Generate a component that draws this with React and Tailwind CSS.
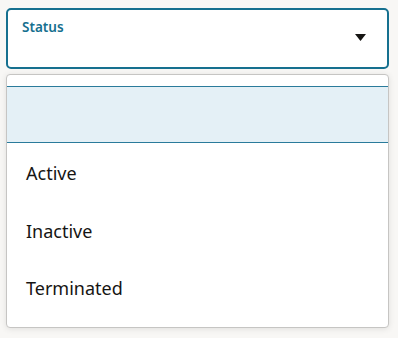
function StatusSelect() {
  const options = ["Active", "Inactive", "Terminated"];

  return (
    <div className="min-h-[338px] bg-[#f8f7f5] pl-[6px] pr-[9px] pt-[8px] font-['Noto_Sans',sans-serif]">
      <div className="flex h-[61px] items-start justify-between rounded-[5px] border-2 border-[#16708f] bg-white pl-[14px] pr-[21px] pt-[9px]">
        <span className="text-[13.5px] font-semibold leading-[16px] text-[#16708f]">Status</span>
        <svg className="mt-[15px]" width="11" height="7" viewBox="0 0 11 7">
          <path d="M0 0h11L5.5 7z" fill="#161513" />
        </svg>
      </div>

      <div className="mt-[5px] rounded-[4px] border border-[#c6c5c3] bg-white pb-[11px] pt-[11px] shadow-[0_1px_6px_rgba(0,0,0,0.1)]">
        <div className="h-[57px] border-y border-[#2a7b9b] bg-[#e4f0f6]" />
        {options.map((option) => (
          <div
            key={option}
            className="flex h-[57.5px] items-center px-[19px] pt-[4px] text-[18px] text-[#161513]"
          >
            {option}
          </div>
        ))}
      </div>
    </div>
  );
}

export default function App() {
  return <StatusSelect />;
}
